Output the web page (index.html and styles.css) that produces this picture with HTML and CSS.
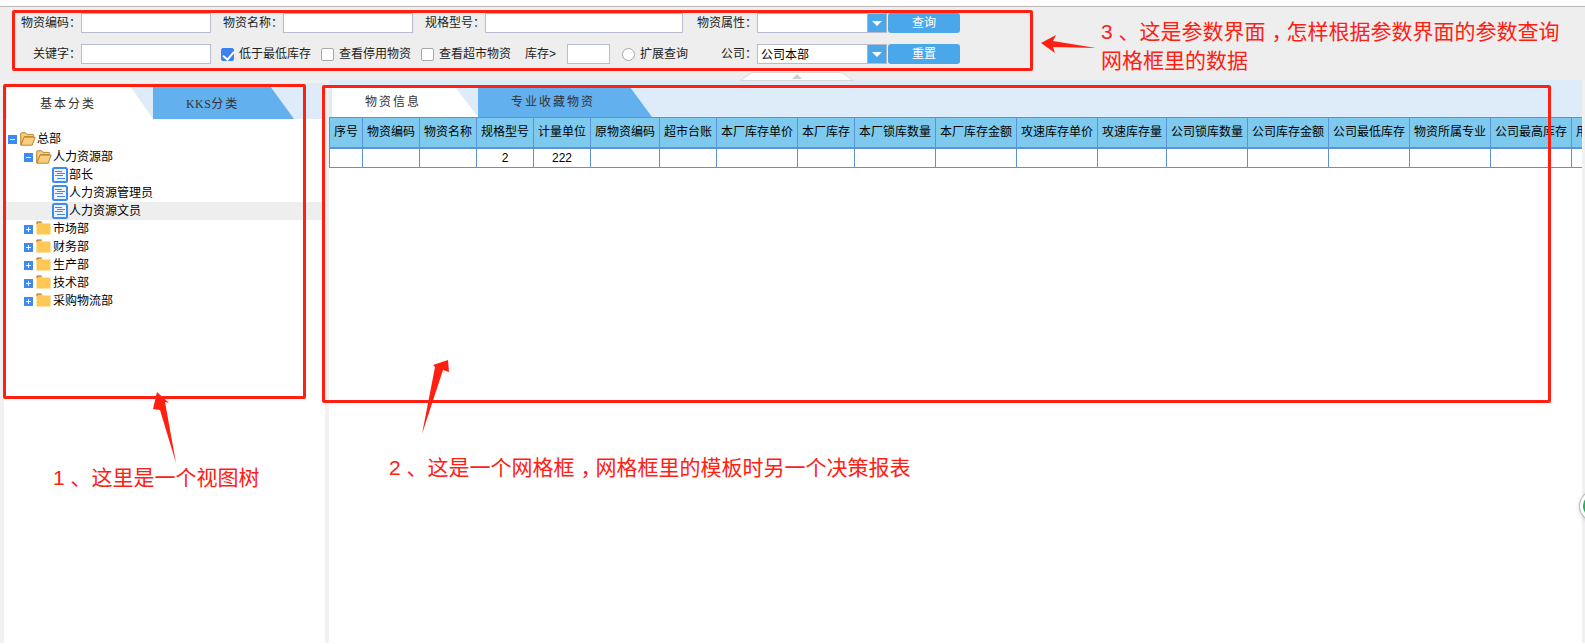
FILE: index.html
```html
<!DOCTYPE html>
<html lang="zh-CN">
<head>
<meta charset="utf-8">
<title>物资查询</title>
<link rel="stylesheet" href="styles.css">
</head>
<body>
<svg class="defs" width="0" height="0" aria-hidden="true">
  <symbol id="folder-open" viewBox="0 0 16 14">
    <path d="M.7 12.8V1.6c0-.5.3-.8.8-.8h4.2l1.2 1.6h6c.5 0 .8.3.8.8v1.4H4.4L.7 12.8z" fill="#f5cd7c" stroke="#bd8430" stroke-width="1"/>
    <path d="M.9 13.2 4 5.2h11.2l-3 8z" fill="#f7cf7d" stroke="#bd8430" stroke-width="1"/>
  </symbol>
  <symbol id="folder" viewBox="0 0 15 14">
    <path d="M.5 1.5c0-.6.4-1 1-1h4l1 2H14.5V13.5H.5z" fill="#fdc854"/>
    <path d="M.5 3V1.500c0-.6.4-1 1-1h4.200L5.700 1.600 2.500 1.700.8 3.300z" fill="#b9853c"/>
  </symbol>
  <symbol id="leaf" viewBox="0 0 16 16">
    <rect width="16" height="16" rx="2.500" fill="#3d8bf2"/>
    <rect x="2" y="2" width="12" height="12" fill="#eef5ff"/>
    <path d="M3 4.500h7M5 6.500h8M3 8.500h8M5 11.500h8" stroke="#3d8bf2" stroke-width="1"/>
  </symbol>
  <symbol id="minus" viewBox="0 0 9 9">
    <rect width="9" height="9" fill="#3d8bf2"/><path d="M2 4.500h5" stroke="#fff"/>
  </symbol>
  <symbol id="plus" viewBox="0 0 9 9">
    <rect width="9" height="9" fill="#3d8bf2"/><path d="M2 4.500h5M4.500 2v5" stroke="#fff"/>
  </symbol>
</svg>

<div class="topline"></div>

<form class="params">
  <div class="param-row">
    <label class="lbl">物资编码：</label><input class="field w130" type="text">
    <label class="lbl ml12">物资名称：</label><input class="field w130" type="text">
    <label class="lbl ml12">规格型号：</label><input class="field w198" type="text">
    <label class="lbl ml14">物资属性：</label>
    <div class="combo"><span class="combo-val"></span><span class="combo-btn"></span></div>
    <button class="btn" type="button">查询</button>
  </div>
  <div class="param-row">
    <label class="lbl">关键字：</label><input class="field w130" type="text">
    <input class="tick ml10" type="checkbox" checked><span class="opt">低于最低库存</span>
    <input class="tick ml10" type="checkbox"><span class="opt">查看停用物资</span>
    <input class="tick ml10" type="checkbox"><span class="opt">查看超市物资</span>
    <span class="stock">库存&gt;</span><input class="field w43" type="text">
    <input class="tick ml12" type="radio"><span class="opt">扩展查询</span>
    <span class="company">公司：</span>
    <div class="combo"><span class="combo-val">公司本部</span><span class="combo-btn"></span></div>
    <button class="btn" type="button">重置</button>
  </div>
  <svg class="collapse" width="114" height="9" viewBox="0 0 114 9"><path d="M.5 8.500 12 .5h90l11.500 8z" fill="#fff" stroke="#d8d8d8"/><path d="M52 7l5-5 5 5z" fill="#cfcfcf"/></svg>
</form>

<main class="main">
  <section class="left">
    <div class="tabs tabs-left">
      <div class="tab tab-on tab-l1">基本分类</div>
      <div class="tab tab-off tab-l2"><span class="latin">KKS</span>分类</div>
    </div>
    <div class="tree">
      <div class="node"><svg class="exp"><use href="#minus"/></svg><svg class="ico-f"><use href="#folder-open"/></svg><span>总部</span></div>
      <div class="node lv1"><svg class="exp"><use href="#minus"/></svg><svg class="ico-f"><use href="#folder-open"/></svg><span>人力资源部</span></div>
      <div class="node lv2"><svg class="ico-l"><use href="#leaf"/></svg><span>部长</span></div>
      <div class="node lv2"><svg class="ico-l"><use href="#leaf"/></svg><span>人力资源管理员</span></div>
      <div class="node lv2 hover"><svg class="ico-l"><use href="#leaf"/></svg><span>人力资源文员</span></div>
      <div class="node lv1"><svg class="exp"><use href="#plus"/></svg><svg class="ico-c"><use href="#folder"/></svg><span>市场部</span></div>
      <div class="node lv1"><svg class="exp"><use href="#plus"/></svg><svg class="ico-c"><use href="#folder"/></svg><span>财务部</span></div>
      <div class="node lv1"><svg class="exp"><use href="#plus"/></svg><svg class="ico-c"><use href="#folder"/></svg><span>生产部</span></div>
      <div class="node lv1"><svg class="exp"><use href="#plus"/></svg><svg class="ico-c"><use href="#folder"/></svg><span>技术部</span></div>
      <div class="node lv1"><svg class="exp"><use href="#plus"/></svg><svg class="ico-c"><use href="#folder"/></svg><span>采购物流部</span></div>
    </div>
  </section>

  <section class="right">
    <div class="tabs tabs-right">
      <div class="tab tab-on tab-r1">物资信息</div>
      <div class="tab tab-off tab-r2">专业收藏物资</div>
    </div>
    <div class="grid-wrap">
      <table class="grid">
        <colgroup>
          <col class="c33"><col class="c57"><col class="c57"><col class="c57"><col class="c57"><col class="c69"><col class="c57"><col class="c81"><col class="c57"><col class="c81"><col class="c81"><col class="c81"><col class="c69"><col class="c81"><col class="c81"><col class="c81"><col class="c81"><col class="c81"><col class="c81">
        </colgroup>
        <thead>
          <tr><th>序号</th><th>物资编码</th><th>物资名称</th><th>规格型号</th><th>计量单位</th><th>原物资编码</th><th>超市台账</th><th>本厂库存单价</th><th>本厂库存</th><th>本厂锁库数量</th><th>本厂库存金额</th><th>攻速库存单价</th><th>攻速库存量</th><th>公司锁库数量</th><th>公司库存金额</th><th>公司最低库存</th><th>物资所属专业</th><th>公司最高库存</th><th>用料计划数量</th></tr>
        </thead>
        <tbody>
          <tr><td></td><td></td><td></td><td>2</td><td>222</td><td></td><td></td><td></td><td></td><td></td><td></td><td></td><td></td><td></td><td></td><td></td><td></td><td></td><td></td></tr>
        </tbody>
      </table>
    </div>
  </section>
</main>

<div class="box box-params"></div>
<div class="box box-tree"></div>
<div class="box box-grid"></div>

<svg class="arrows" width="1585" height="644" viewBox="0 0 1585 644" aria-hidden="true">
  <path d="M1041 43 1056 35 1053 41 1096 48 1053 47 1055 53z" />
  <path d="M157 392 169 403 165 402 176 463 160 410 153 409z" />
  <path d="M448 360 449 372 443 370 422 434 435 367 433 365z" />
</svg>

<p class="note note3">3 、这是参数界面<span class="comma">，</span>怎样根据参数界面的参数查询<br>网格框里的数据</p>
<p class="note note1">1 、这里是一个视图树</p>
<p class="note note2">2 、这是一个网格框<span class="comma">，</span>网格框里的模板时另一个决策报表</p>

<div class="badge"></div>
</body>
</html>
```
FILE: styles.css
```css
* { box-sizing: border-box; }
html, body { margin: 0; height: 100%; }
body {
  position: relative;
  width: 1585px;
  height: 644px;
  overflow: hidden;
  background: #fff;
  color: #000;
  font: 12px/18px "Liberation Sans", "Noto Sans CJK SC", sans-serif;
}
.defs { position: absolute; }

.topline { height: 7px; border-bottom: 1px solid #bdb9b9; background: #fff; }

.params {
  position: relative;
  height: 73px;
  padding: 6px 0 0 21px;
  background: #eee;
  display: flex;
  flex-direction: column;
  gap: 11px;
}
.param-row { display: flex; align-items: center; height: 20px; color: #222; }
.lbl { width: 60px; text-align: right; white-space: nowrap; }
.field { height: 20px; padding: 0 3px; border: 1px solid #b9bccf; background: #fff; outline: none; }
.w130 { width: 130px; }
.w198 { width: 198px; }
.w43 { width: 43px; }
.ml10 { margin-left: 10px; }
.ml12 { margin-left: 12px; }
.ml14 { margin-left: 14px; }
.tick {
  appearance: none;
  position: relative;
  width: 13px;
  height: 13px;
  margin-top: 0;
  margin-bottom: 0;
  margin-right: 5px;
  flex: none;
  border: 1px solid #a8a8a8;
  border-radius: 2px;
  background: #fff;
}
.tick[type="radio"] { border-radius: 50%; }
.tick:checked { border-color: #3b82ee; background: #3b82ee; }
.tick:checked::after {
  content: "";
  position: absolute;
  left: 3px;
  top: 0;
  width: 5px;
  height: 9px;
  border: solid #fff;
  border-width: 0 2px 2px 0;
  transform: rotate(40deg);
}
.opt { white-space: nowrap; }
.stock { width: 42px; margin-left: 14px; }
.company { width: 36px; margin-left: 33px; }
.combo { display: flex; width: 130px; height: 20px; border: 1px solid #b9bccf; border-right-color: #b5b5b5; background: #fff; }
.combo-val { flex: 1; padding-left: 3px; line-height: 20px; color: #000; }
.combo-btn {
  position: relative;
  width: 19px;
  background: #4aa8ea;
  border-left: 1px solid #b5b5b5;
}
.combo-btn::after {
  content: "";
  position: absolute;
  left: 4px;
  top: 7px;
  border-left: 5px solid transparent;
  border-right: 5px solid transparent;
  border-top: 5px solid #fff;
}
.btn {
  width: 72px;
  height: 20px;
  margin-left: 1px;
  padding: 0;
  border: 0;
  border-radius: 3px;
  background: #4aa8ea;
  color: #fff;
  font: inherit;
}
.collapse { position: absolute; left: 740px; top: 65px; }

.main { display: flex; height: 563px; background: #f1f1f1; }
.left { width: 321px; margin: 3px 0 0 4px; background: #fff; display: flex; flex-direction: column; }
.right { width: 1253px; margin-left: 4px; background: #fff; display: flex; flex-direction: column; }

.tabs { display: flex; align-items: flex-end; background: #deecf9; flex: none; }
.tabs-left { height: 36px; padding-left: 3px; }
.tabs-right { height: 37px; padding-left: 3px; }
.tab {
  display: flex;
  align-items: center;
  padding-left: 33px;
  letter-spacing: 2px;
  color: #333;
  font-family: "Liberation Serif", "Noto Sans CJK SC", serif;
}
.latin { letter-spacing: .4px; }
.tab-on { background: #fff; }
.tab-off { background: #63b0ee; }
.tab-l1 { width: 146px; height: 33px; padding-top: 2px; clip-path: polygon(0 0, 123px 0, 100% 100%, 0 100%); }
.tab-l2 { width: 141px; height: 33px; padding-top: 2px; clip-path: polygon(0 0, 117px 0, 100% 100%, 0 100%); }
.tab-r1 { width: 146px; height: 30px; clip-path: polygon(0 0, 123px 0, 100% 100%, 0 100%); }
.tab-r2 { width: 174px; height: 30px; clip-path: polygon(0 0, 152px 0, 100% 100%, 0 100%); }

.tree { padding-top: 11px; }
.node { display: flex; align-items: center; height: 18px; padding-left: 4px; white-space: nowrap; }
.lv1 { padding-left: 20px; }
.lv2 { padding-left: 48px; }
.hover { background: #eee; }
.exp { width: 9px; height: 9px; flex: none; margin-right: 3px; }
.ico-f { width: 16px; height: 14px; flex: none; margin-right: 1px; }
.ico-c { width: 15px; height: 14px; flex: none; margin: -3px 2px 0 0; }
.ico-l { width: 16px; height: 16px; flex: none; margin-right: 1px; }

.grid-wrap { overflow: hidden; }
.grid { border-collapse: collapse; table-layout: fixed; width: 1323px; }
.c33 { width: 33px; }
.c57 { width: 57px; }
.c69 { width: 69px; }
.c81 { width: 81px; }
.grid th, .grid td {
  border: 1px solid #5c93d8;
  padding: 0;
  text-align: center;
  white-space: nowrap;
  overflow: hidden;
  font-weight: 400;
}
.grid th { height: 30px; background: #7ecaee; border-bottom-width: 2px; }
.grid td { height: 19px; }

.box { position: absolute; border: 3px solid #ff2012; border-radius: 2px; }
.box-params { left: 12px; top: 10px; width: 1021px; height: 61px; }
.box-tree { left: 3px; top: 84px; width: 303px; height: 315px; }
.box-grid { left: 322px; top: 85px; width: 1229px; height: 318px; }

.arrows { position: absolute; left: 0; top: 0; fill: #ff2012; pointer-events: none; }

.note {
  position: absolute;
  margin: 0;
  color: #ff2012;
  font: 21px/30px "Liberation Sans", "Noto Sans CJK SC", sans-serif;
  white-space: nowrap;
}
.comma { margin-left: 6px; letter-spacing: -6px; }
.note3 { left: 1101px; top: 17px; line-height: 29px; }
.note1 { left: 53px; top: 463px; }
.note2 { left: 389px; top: 453px; }

.badge {
  position: absolute;
  left: 1580px;
  top: 491px;
  width: 30px;
  height: 30px;
  border-radius: 50%;
  border: 3px solid #fff;
  background: #1fb35a;
  box-shadow: 0 0 0 1px #bbb, 0 1px 5px rgba(0, 0, 0, .25);
}
```
